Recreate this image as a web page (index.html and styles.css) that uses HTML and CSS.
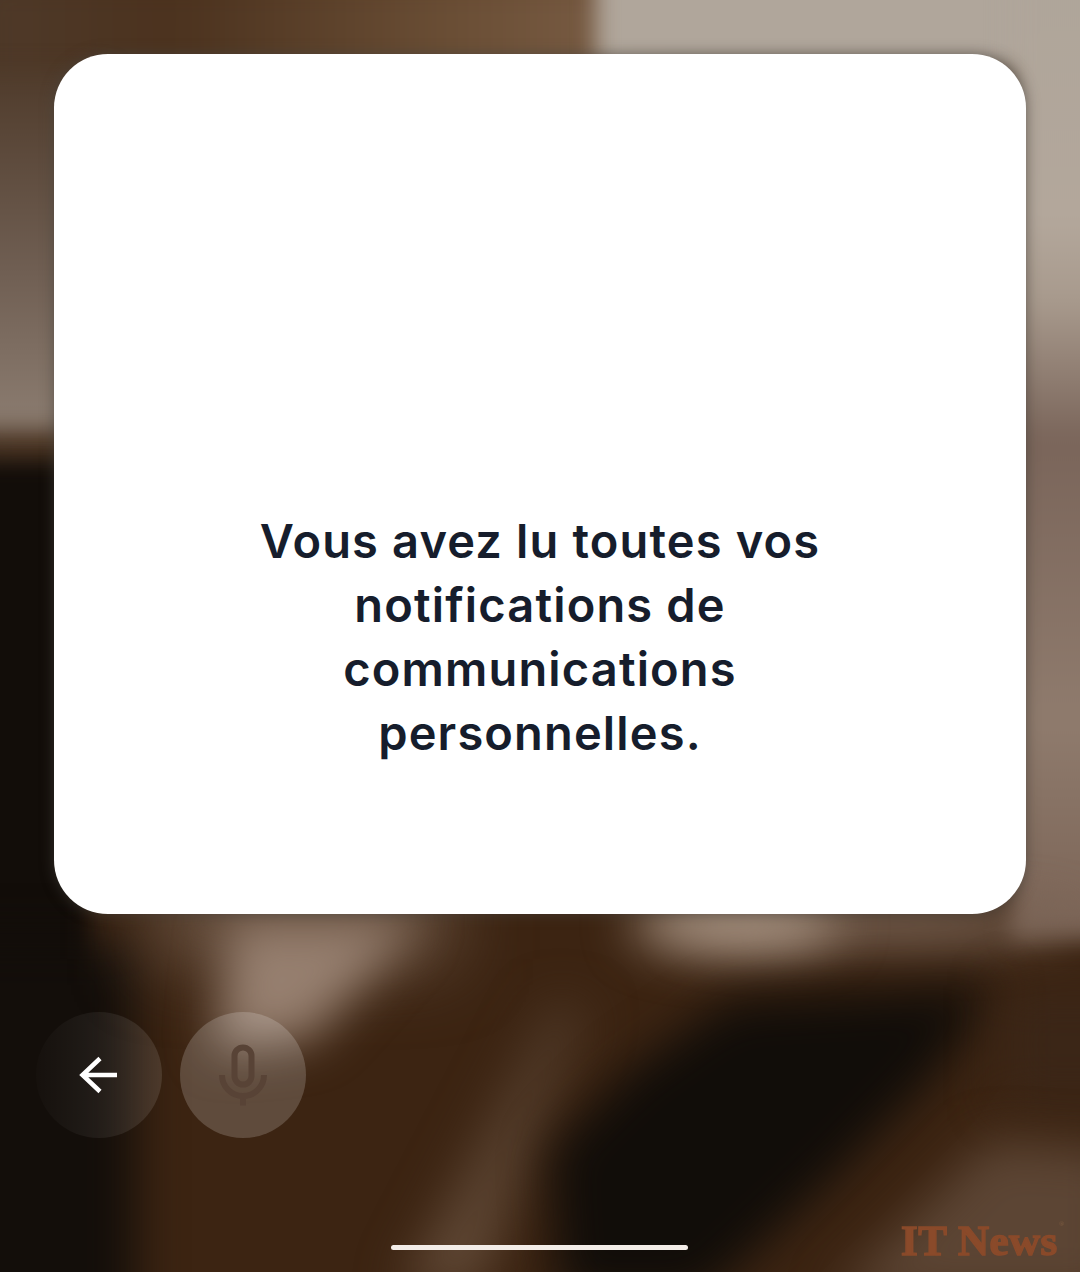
FILE: index.html
```html
<!DOCTYPE html>
<html lang="fr">
<head>
<meta charset="utf-8">
<title>Notifications</title>
<link rel="stylesheet" href="styles.css">
</head>
<body>
<div class="screen">
  <svg class="backdrop" viewBox="0 0 1080 1272" preserveAspectRatio="none" aria-hidden="true">
    <defs>
      <filter id="wide" filterUnits="userSpaceOnUse" x="-300" y="-300" width="1680" height="1872" color-interpolation-filters="sRGB"><feGaussianBlur stdDeviation="38"/></filter>
      <filter id="soft" filterUnits="userSpaceOnUse" x="-300" y="-300" width="1680" height="1872" color-interpolation-filters="sRGB"><feGaussianBlur stdDeviation="24"/></filter>
      <filter id="tight" filterUnits="userSpaceOnUse" x="-300" y="-300" width="1680" height="1872" color-interpolation-filters="sRGB"><feGaussianBlur stdDeviation="11"/></filter>
      <linearGradient id="topBand" x1="0" x2="1" y1="0" y2="0">
        <stop offset="0" stop-color="#4f3b2b"/>
        <stop offset="0.3" stop-color="#4b321e"/>
        <stop offset="0.7" stop-color="#6a4e35"/>
        <stop offset="1" stop-color="#7c5f47"/>
      </linearGradient>
      <linearGradient id="leftGlow" x1="0" x2="0" y1="0" y2="1">
        <stop offset="0" stop-color="#4f3b2b"/>
        <stop offset="0.55" stop-color="#6f5e52"/>
        <stop offset="1" stop-color="#8c7d71"/>
      </linearGradient>
      <linearGradient id="rightSide" x1="0" x2="0" y1="0" y2="1">
        <stop offset="0" stop-color="#aea59a"/>
        <stop offset="0.28" stop-color="#b3a79b"/>
        <stop offset="0.36" stop-color="#a89a8d"/>
        <stop offset="0.5" stop-color="#7a655a"/>
        <stop offset="0.78" stop-color="#8f7b6d"/>
        <stop offset="1" stop-color="#7a6355"/>
      </linearGradient>
      <linearGradient id="streak" x1="0" x2="0" y1="0" y2="1">
        <stop offset="0" stop-color="#4a3423"/>
        <stop offset="1" stop-color="#624a37"/>
      </linearGradient>
    </defs>
    <rect width="1080" height="1272" fill="#3c2412"/>
    <rect x="-40" y="-40" width="700" height="520" fill="url(#topBand)" filter="url(#soft)"/>
    <rect x="596" y="-60" width="560" height="130" fill="#b0a69b" filter="url(#tight)"/>
    <rect x="1010" y="-60" width="146" height="1000" fill="url(#rightSide)" filter="url(#tight)"/>
    <rect x="-80" y="70" width="190" height="360" fill="url(#leftGlow)" filter="url(#tight)"/>
    <rect x="-80" y="460" width="170" height="560" fill="#120d09" filter="url(#tight)"/>
    <rect x="-80" y="940" width="215" height="420" fill="#130e0a" filter="url(#soft)"/>
    <rect x="150" y="880" width="300" height="80" fill="#6e5746" filter="url(#wide)"/>
    <path d="M230 920 L420 920 L310 1040 L215 1050 Z" fill="#967f6f" filter="url(#soft)"/>
    <ellipse cx="880" cy="925" rx="200" ry="22" fill="#7a6455" filter="url(#soft)"/>
    <ellipse cx="735" cy="925" rx="105" ry="30" fill="#a48f7e" filter="url(#soft)"/>
    <path d="M550 1000 L590 1010 L480 1290 L400 1290 Z" fill="url(#streak)" filter="url(#soft)"/>
    <path d="M1000 985 L730 1000 L630 1070 L550 1150 L560 1300 L700 1300 L830 1180 L930 1080 Z" fill="#110d09" filter="url(#soft)"/>
    <rect x="1000" y="985" width="140" height="120" fill="#3b2617" filter="url(#soft)"/>
    <path d="M830 1300 L1120 1300 L1120 1150 L990 1140 Z" fill="#5c4534" filter="url(#soft)"/>
  </svg>

  <main class="stack">
    <section class="card">
      <p class="card-message">Vous avez lu toutes vos notifications de communications personnelles.</p>
    </section>
    <div class="actions">
      <button class="round round-dark" type="button" aria-label="Retour">
        <svg viewBox="0 0 126 126" class="round-icon">
          <path d="M81 63H47M64 46.500L46.500 63L64 79.500" fill="none" stroke="#fff" stroke-width="4.500"/>
        </svg>
      </button>
      <button class="round round-light" type="button" aria-label="Micro">
        <svg viewBox="0 0 126 126" class="round-icon">
          <rect x="54.500" y="35.500" width="17" height="37" rx="8.500" fill="none" stroke="#584336" stroke-width="6"/>
          <path d="M42 63a21 21 0 0 0 42 0M63 84v9.500" fill="none" stroke="#584336" stroke-width="6"/>
        </svg>
      </button>
    </div>
  </main>

  <div class="home-bar"></div>
  <div class="brand-mark">IT News<span class="brand-reg">®</span></div>
</div>
</body>
</html>
```
FILE: styles.css
```css
html, body {
  margin: 0;
  padding: 0;
}

.screen {
  position: relative;
  width: 1080px;
  height: 1272px;
  overflow: hidden;
  background: #3c2412;
  font-family: Inter, "Noto Sans", sans-serif;
}

.backdrop {
  position: absolute;
  inset: 0;
  width: 100%;
  height: 100%;
}

.stack {
  position: relative;
  display: flex;
  flex-direction: column;
  padding-top: 54px;
}

.card {
  box-sizing: border-box;
  width: 972px;
  height: 860px;
  margin-left: 54px;
  padding-bottom: 149px;
  display: flex;
  flex-direction: column;
  justify-content: flex-end;
  align-items: center;
  background: #fff;
  border-radius: 54px;
  box-shadow: 0 0 14px rgba(70, 66, 62, 0.6);
}

.card-message {
  margin: 0;
  max-width: 600px;
  text-align: center;
  font-size: 47px;
  font-weight: 600;
  line-height: 64px;
  letter-spacing: 1.15px;
  color: #161d2c;
}

.actions {
  display: flex;
  gap: 18px;
  margin-top: 98px;
  padding-left: 36px;
}

.round {
  width: 126px;
  height: 126px;
  padding: 0;
  border: 0;
  border-radius: 50%;
}

.round-dark {
  background: linear-gradient(90deg, rgba(255, 255, 255, 0.01), rgba(255, 255, 255, 0.11));
}

.round-light {
  background: rgba(255, 255, 255, 0.18);
}

.round-icon {
  display: block;
  width: 126px;
  height: 126px;
}

.home-bar {
  position: absolute;
  left: 391px;
  top: 1245px;
  width: 297px;
  height: 5px;
  border-radius: 3px;
  background: #f3ede8;
}

.brand-mark {
  position: absolute;
  left: 901px;
  top: 1218px;
  font-family: "Liberation Serif", serif;
  font-size: 43px;
  font-weight: 700;
  line-height: 46px;
  letter-spacing: 0.5px;
  white-space: nowrap;
  color: #8a4a2a;
  -webkit-text-stroke: 1.5px #8a4a2a;
  filter: blur(0.6px);
}

.brand-reg {
  position: absolute;
  top: 0;
  right: -7px;
  line-height: 12px;
  font-size: 7px;
  -webkit-text-stroke: 0;
  color: #7a5a40;
}
```
